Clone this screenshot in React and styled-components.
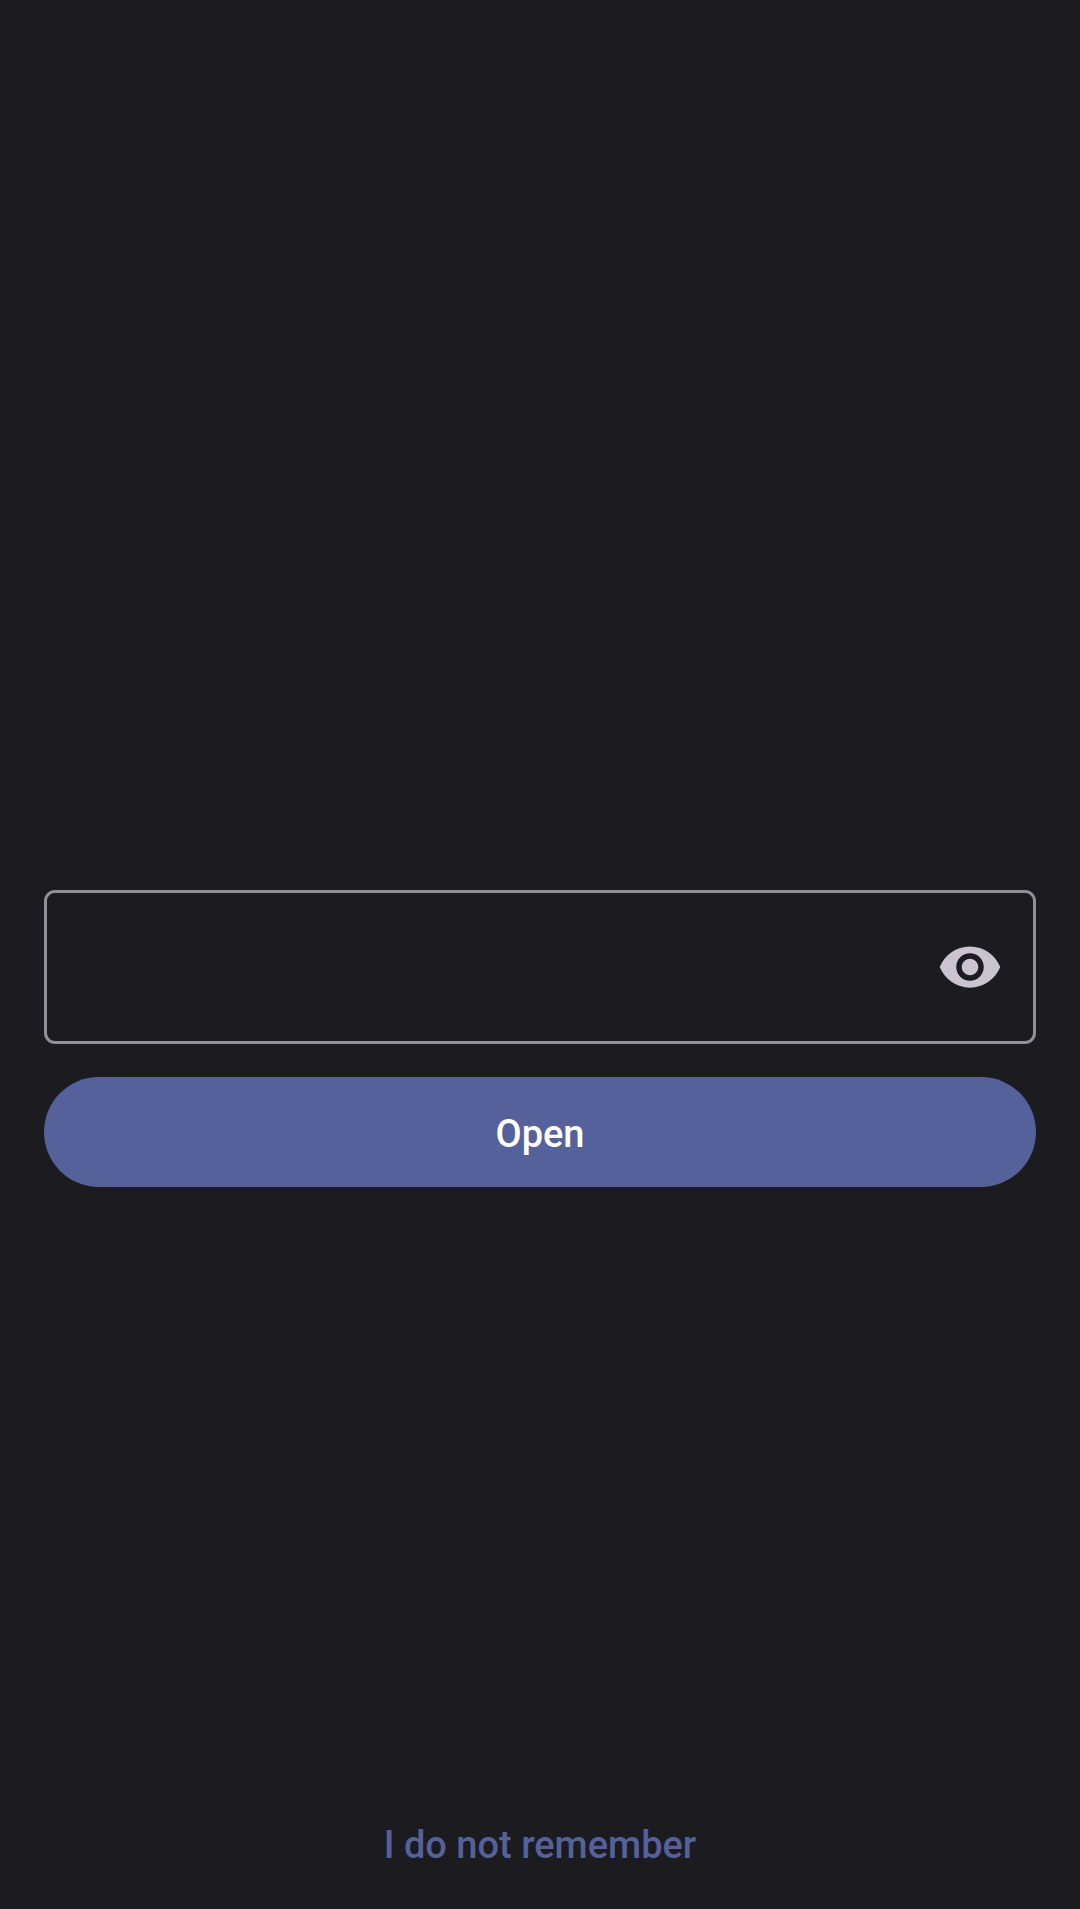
import React, { useState } from "react";
import styled, { createGlobalStyle } from "styled-components";

const GlobalStyle = createGlobalStyle`
  *, *::before, *::after { box-sizing: border-box; }
  body {
    margin: 0;
    background: #1c1b1f;
    font-family: Roboto, "Liberation Sans", sans-serif;
  }
`;

const Page = styled.div`
  display: flex;
  flex-direction: column;
  min-height: 100vh;
  padding: 0 44px 11px;
`;

const Form = styled.form`
  flex: 1;
  display: flex;
  flex-direction: column;
  justify-content: center;
  gap: 33px;
  padding-top: 289px;
`;

const Field = styled.div`
  display: flex;
  height: 154px;
  border: 3px solid #918f99;
  border-radius: 11px;
`;

const PasswordInput = styled.input`
  flex: 1;
  min-width: 0;
  padding: 0 0 0 41px;
  border: 0;
  outline: 0;
  background: transparent;
  color: #e6e1e5;
  font: 400 44px/64px Roboto, "Liberation Sans", sans-serif;
`;

const IconButton = styled.button`
  display: flex;
  align-items: center;
  justify-content: center;
  width: 126px;
  padding: 0;
  border: 0;
  background: transparent;
  color: #cac4d0;
  cursor: pointer;
`;

const ActionButton = styled.button`
  height: 110px;
  padding: 4px 66px 0;
  border: 0;
  border-radius: 55px;
  background: ${({ $filled }) => ($filled ? "#55619b" : "transparent")};
  color: ${({ $filled }) => ($filled ? "#ffffff" : "#55619b")};
  font: 500 38px/56px Roboto, "Liberation Sans", sans-serif;
  cursor: pointer;
`;

const Footer = styled.footer`
  display: flex;
  justify-content: center;
`;

function EyeIcon() {
  return (
    <svg width="66" height="66" viewBox="0 0 24 24" fill="currentColor" aria-hidden="true">
      <path d="M12 4.5C7 4.5 2.73 7.61 1 12c1.73 4.39 6 7.5 11 7.5s9.27-3.11 11-7.5c-1.73-4.39-6-7.5-11-7.5zM12 17c-2.76 0-5-2.24-5-5s2.24-5 5-5 5 2.24 5 5-2.24 5-5 5zm0-8c-1.66 0-3 1.34-3 3s1.34 3 3 3 3-1.34 3-3-1.34-3-3-3z" />
    </svg>
  );
}

export default function App() {
  const [visible, setVisible] = useState(false);

  return (
    <>
      <GlobalStyle />
      <Page>
        <Form onSubmit={(event) => event.preventDefault()}>
          <Field>
            <PasswordInput type={visible ? "text" : "password"} aria-label="Password" />
            <IconButton
              type="button"
              aria-label="Show password"
              aria-pressed={visible}
              onClick={() => setVisible(!visible)}
            >
              <EyeIcon />
            </IconButton>
          </Field>
          <ActionButton type="submit" $filled>Open</ActionButton>
        </Form>
        <Footer>
          <ActionButton type="button">I do not remember</ActionButton>
        </Footer>
      </Page>
    </>
  );
}
